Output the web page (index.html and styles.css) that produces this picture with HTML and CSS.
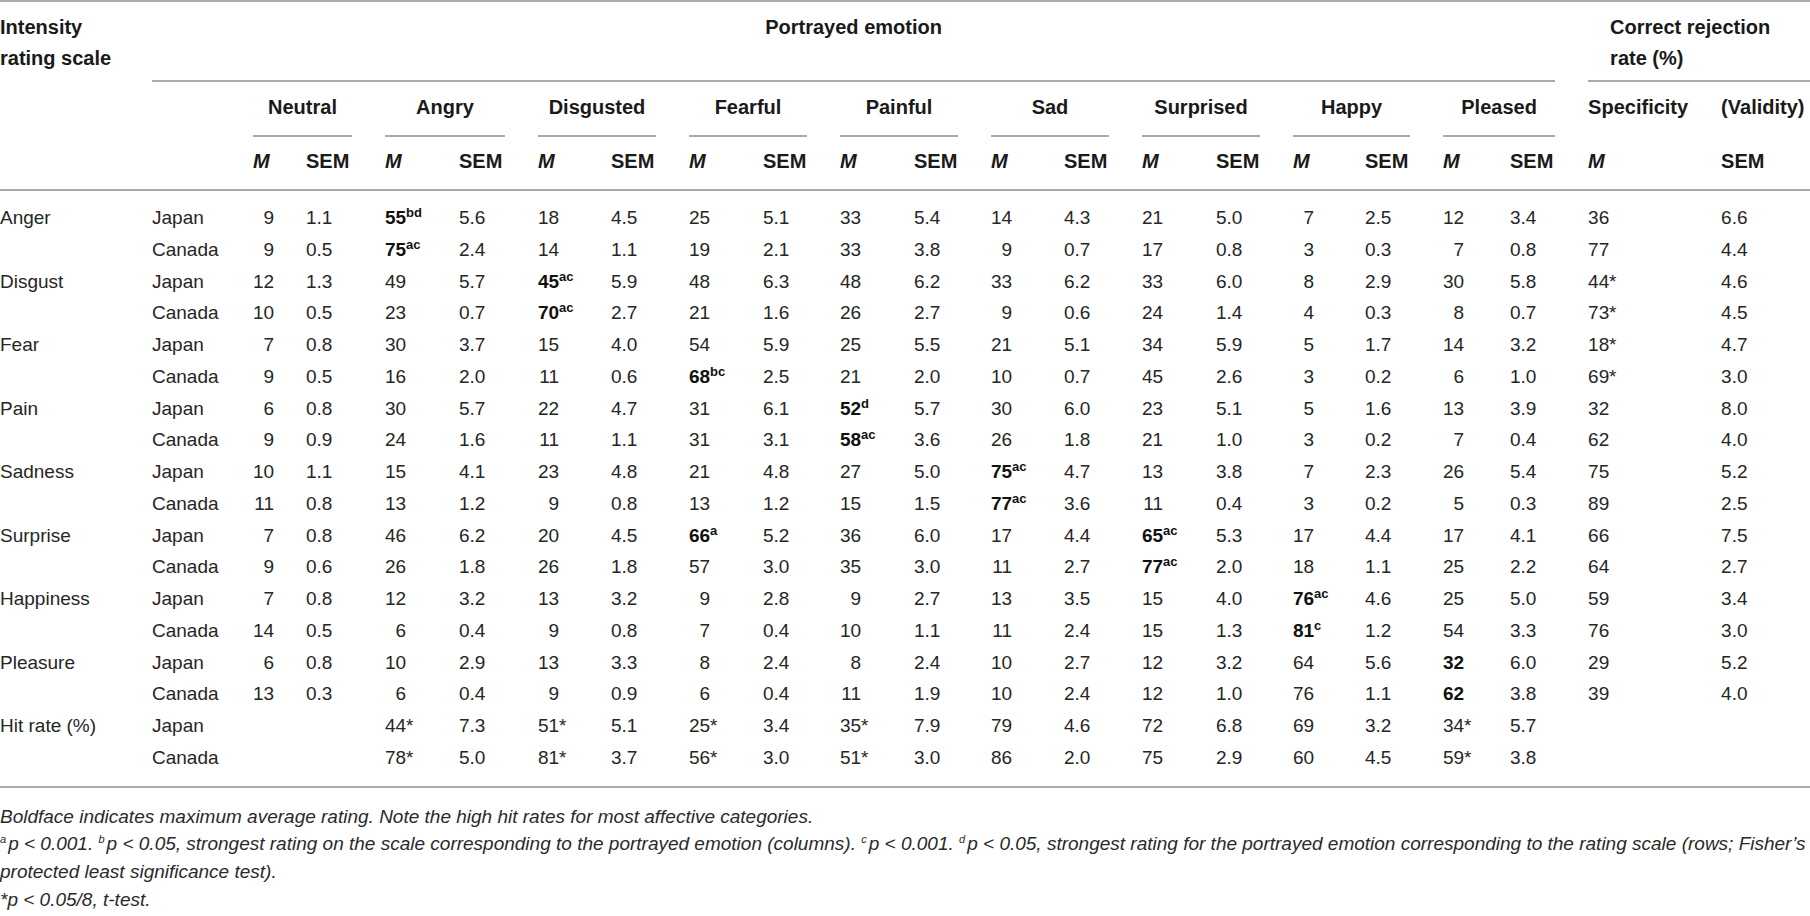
FILE: index.html
```html
<!DOCTYPE html>
<html lang="en">
<head>
<meta charset="utf-8">
<title>Intensity ratings by portrayed emotion</title>
<link rel="stylesheet" href="styles.css">
</head>
<body>
<div class="table-box">
<table class="data">
<colgroup>
<col class="w152"><col class="w101">
<col class="w53"><col class="w79">
<col class="w74"><col class="w79">
<col class="w73"><col class="w78">
<col class="w74"><col class="w77">
<col class="w74"><col class="w77">
<col class="w73"><col class="w78">
<col class="w74"><col class="w77">
<col class="w72"><col class="w78">
<col class="w67"><col class="w78">
<col class="w133"><col class="w89">
</colgroup>
<thead>
<tr class="h1">
<th><div class="h1-cell narrow">Intensity rating scale</div></th>
<th colspan="19"><div class="h1-cell span-line center gap">Portrayed emotion</div></th>
<th colspan="2"><div class="h1-cell span-line indent">Correct rejection rate (%)</div></th>
</tr>
<tr class="h2">
<th></th><th></th>
<th colspan="2"><div class="h2-cell grp">Neutral</div></th>
<th colspan="2"><div class="h2-cell grp">Angry</div></th>
<th colspan="2"><div class="h2-cell grp">Disgusted</div></th>
<th colspan="2"><div class="h2-cell grp">Fearful</div></th>
<th colspan="2"><div class="h2-cell grp">Painful</div></th>
<th colspan="2"><div class="h2-cell grp">Sad</div></th>
<th colspan="2"><div class="h2-cell grp">Surprised</div></th>
<th colspan="2"><div class="h2-cell grp">Happy</div></th>
<th colspan="2"><div class="h2-cell grp">Pleased</div></th>
<th><div class="h2-cell">Specificity</div></th>
<th><div class="h2-cell">(Validity)</div></th>
</tr>
<tr class="h3">
<th></th><th></th>
<th><i>M</i></th><th>SEM</th>
<th><i>M</i></th><th>SEM</th>
<th><i>M</i></th><th>SEM</th>
<th><i>M</i></th><th>SEM</th>
<th><i>M</i></th><th>SEM</th>
<th><i>M</i></th><th>SEM</th>
<th><i>M</i></th><th>SEM</th>
<th><i>M</i></th><th>SEM</th>
<th><i>M</i></th><th>SEM</th>
<th><i>M</i></th><th>SEM</th>
</tr>
</thead>
<tbody>
<tr class="first">
<td>Anger</td><td>Japan</td>
<td><span class="n">9</span></td><td>1.1</td>
<td><b class="n">55</b><sup class="sb">bd</sup></td><td>5.6</td>
<td><span class="n">18</span></td><td>4.5</td>
<td><span class="n">25</span></td><td>5.1</td>
<td><span class="n">33</span></td><td>5.4</td>
<td><span class="n">14</span></td><td>4.3</td>
<td><span class="n">21</span></td><td>5.0</td>
<td><span class="n">7</span></td><td>2.5</td>
<td><span class="n">12</span></td><td>3.4</td>
<td><span class="n">36</span></td><td>6.6</td>
</tr>
<tr>
<td></td><td>Canada</td>
<td><span class="n">9</span></td><td>0.5</td>
<td><b class="n">75</b><sup class="sb">ac</sup></td><td>2.4</td>
<td><span class="n">14</span></td><td>1.1</td>
<td><span class="n">19</span></td><td>2.1</td>
<td><span class="n">33</span></td><td>3.8</td>
<td><span class="n">9</span></td><td>0.7</td>
<td><span class="n">17</span></td><td>0.8</td>
<td><span class="n">3</span></td><td>0.3</td>
<td><span class="n">7</span></td><td>0.8</td>
<td><span class="n">77</span></td><td>4.4</td>
</tr>
<tr>
<td>Disgust</td><td>Japan</td>
<td><span class="n">12</span></td><td>1.3</td>
<td><span class="n">49</span></td><td>5.7</td>
<td><b class="n">45</b><sup class="sb">ac</sup></td><td>5.9</td>
<td><span class="n">48</span></td><td>6.3</td>
<td><span class="n">48</span></td><td>6.2</td>
<td><span class="n">33</span></td><td>6.2</td>
<td><span class="n">33</span></td><td>6.0</td>
<td><span class="n">8</span></td><td>2.9</td>
<td><span class="n">30</span></td><td>5.8</td>
<td><span class="n">44</span>*</td><td>4.6</td>
</tr>
<tr>
<td></td><td>Canada</td>
<td><span class="n">10</span></td><td>0.5</td>
<td><span class="n">23</span></td><td>0.7</td>
<td><b class="n">70</b><sup class="sb">ac</sup></td><td>2.7</td>
<td><span class="n">21</span></td><td>1.6</td>
<td><span class="n">26</span></td><td>2.7</td>
<td><span class="n">9</span></td><td>0.6</td>
<td><span class="n">24</span></td><td>1.4</td>
<td><span class="n">4</span></td><td>0.3</td>
<td><span class="n">8</span></td><td>0.7</td>
<td><span class="n">73</span>*</td><td>4.5</td>
</tr>
<tr>
<td>Fear</td><td>Japan</td>
<td><span class="n">7</span></td><td>0.8</td>
<td><span class="n">30</span></td><td>3.7</td>
<td><span class="n">15</span></td><td>4.0</td>
<td><span class="n">54</span></td><td>5.9</td>
<td><span class="n">25</span></td><td>5.5</td>
<td><span class="n">21</span></td><td>5.1</td>
<td><span class="n">34</span></td><td>5.9</td>
<td><span class="n">5</span></td><td>1.7</td>
<td><span class="n">14</span></td><td>3.2</td>
<td><span class="n">18</span>*</td><td>4.7</td>
</tr>
<tr>
<td></td><td>Canada</td>
<td><span class="n">9</span></td><td>0.5</td>
<td><span class="n">16</span></td><td>2.0</td>
<td><span class="n">11</span></td><td>0.6</td>
<td><b class="n">68</b><sup class="sb">bc</sup></td><td>2.5</td>
<td><span class="n">21</span></td><td>2.0</td>
<td><span class="n">10</span></td><td>0.7</td>
<td><span class="n">45</span></td><td>2.6</td>
<td><span class="n">3</span></td><td>0.2</td>
<td><span class="n">6</span></td><td>1.0</td>
<td><span class="n">69</span>*</td><td>3.0</td>
</tr>
<tr>
<td>Pain</td><td>Japan</td>
<td><span class="n">6</span></td><td>0.8</td>
<td><span class="n">30</span></td><td>5.7</td>
<td><span class="n">22</span></td><td>4.7</td>
<td><span class="n">31</span></td><td>6.1</td>
<td><b class="n">52</b><sup class="sb">d</sup></td><td>5.7</td>
<td><span class="n">30</span></td><td>6.0</td>
<td><span class="n">23</span></td><td>5.1</td>
<td><span class="n">5</span></td><td>1.6</td>
<td><span class="n">13</span></td><td>3.9</td>
<td><span class="n">32</span></td><td>8.0</td>
</tr>
<tr>
<td></td><td>Canada</td>
<td><span class="n">9</span></td><td>0.9</td>
<td><span class="n">24</span></td><td>1.6</td>
<td><span class="n">11</span></td><td>1.1</td>
<td><span class="n">31</span></td><td>3.1</td>
<td><b class="n">58</b><sup class="sb">ac</sup></td><td>3.6</td>
<td><span class="n">26</span></td><td>1.8</td>
<td><span class="n">21</span></td><td>1.0</td>
<td><span class="n">3</span></td><td>0.2</td>
<td><span class="n">7</span></td><td>0.4</td>
<td><span class="n">62</span></td><td>4.0</td>
</tr>
<tr>
<td>Sadness</td><td>Japan</td>
<td><span class="n">10</span></td><td>1.1</td>
<td><span class="n">15</span></td><td>4.1</td>
<td><span class="n">23</span></td><td>4.8</td>
<td><span class="n">21</span></td><td>4.8</td>
<td><span class="n">27</span></td><td>5.0</td>
<td><b class="n">75</b><sup class="sb">ac</sup></td><td>4.7</td>
<td><span class="n">13</span></td><td>3.8</td>
<td><span class="n">7</span></td><td>2.3</td>
<td><span class="n">26</span></td><td>5.4</td>
<td><span class="n">75</span></td><td>5.2</td>
</tr>
<tr>
<td></td><td>Canada</td>
<td><span class="n">11</span></td><td>0.8</td>
<td><span class="n">13</span></td><td>1.2</td>
<td><span class="n">9</span></td><td>0.8</td>
<td><span class="n">13</span></td><td>1.2</td>
<td><span class="n">15</span></td><td>1.5</td>
<td><b class="n">77</b><sup class="sb">ac</sup></td><td>3.6</td>
<td><span class="n">11</span></td><td>0.4</td>
<td><span class="n">3</span></td><td>0.2</td>
<td><span class="n">5</span></td><td>0.3</td>
<td><span class="n">89</span></td><td>2.5</td>
</tr>
<tr>
<td>Surprise</td><td>Japan</td>
<td><span class="n">7</span></td><td>0.8</td>
<td><span class="n">46</span></td><td>6.2</td>
<td><span class="n">20</span></td><td>4.5</td>
<td><b class="n">66</b><sup class="sb">a</sup></td><td>5.2</td>
<td><span class="n">36</span></td><td>6.0</td>
<td><span class="n">17</span></td><td>4.4</td>
<td><b class="n">65</b><sup class="sb">ac</sup></td><td>5.3</td>
<td><span class="n">17</span></td><td>4.4</td>
<td><span class="n">17</span></td><td>4.1</td>
<td><span class="n">66</span></td><td>7.5</td>
</tr>
<tr>
<td></td><td>Canada</td>
<td><span class="n">9</span></td><td>0.6</td>
<td><span class="n">26</span></td><td>1.8</td>
<td><span class="n">26</span></td><td>1.8</td>
<td><span class="n">57</span></td><td>3.0</td>
<td><span class="n">35</span></td><td>3.0</td>
<td><span class="n">11</span></td><td>2.7</td>
<td><b class="n">77</b><sup class="sb">ac</sup></td><td>2.0</td>
<td><span class="n">18</span></td><td>1.1</td>
<td><span class="n">25</span></td><td>2.2</td>
<td><span class="n">64</span></td><td>2.7</td>
</tr>
<tr>
<td>Happiness</td><td>Japan</td>
<td><span class="n">7</span></td><td>0.8</td>
<td><span class="n">12</span></td><td>3.2</td>
<td><span class="n">13</span></td><td>3.2</td>
<td><span class="n">9</span></td><td>2.8</td>
<td><span class="n">9</span></td><td>2.7</td>
<td><span class="n">13</span></td><td>3.5</td>
<td><span class="n">15</span></td><td>4.0</td>
<td><b class="n">76</b><sup class="sb">ac</sup></td><td>4.6</td>
<td><span class="n">25</span></td><td>5.0</td>
<td><span class="n">59</span></td><td>3.4</td>
</tr>
<tr>
<td></td><td>Canada</td>
<td><span class="n">14</span></td><td>0.5</td>
<td><span class="n">6</span></td><td>0.4</td>
<td><span class="n">9</span></td><td>0.8</td>
<td><span class="n">7</span></td><td>0.4</td>
<td><span class="n">10</span></td><td>1.1</td>
<td><span class="n">11</span></td><td>2.4</td>
<td><span class="n">15</span></td><td>1.3</td>
<td><b class="n">81</b><sup class="sb">c</sup></td><td>1.2</td>
<td><span class="n">54</span></td><td>3.3</td>
<td><span class="n">76</span></td><td>3.0</td>
</tr>
<tr>
<td>Pleasure</td><td>Japan</td>
<td><span class="n">6</span></td><td>0.8</td>
<td><span class="n">10</span></td><td>2.9</td>
<td><span class="n">13</span></td><td>3.3</td>
<td><span class="n">8</span></td><td>2.4</td>
<td><span class="n">8</span></td><td>2.4</td>
<td><span class="n">10</span></td><td>2.7</td>
<td><span class="n">12</span></td><td>3.2</td>
<td><span class="n">64</span></td><td>5.6</td>
<td><b class="n">32</b></td><td>6.0</td>
<td><span class="n">29</span></td><td>5.2</td>
</tr>
<tr>
<td></td><td>Canada</td>
<td><span class="n">13</span></td><td>0.3</td>
<td><span class="n">6</span></td><td>0.4</td>
<td><span class="n">9</span></td><td>0.9</td>
<td><span class="n">6</span></td><td>0.4</td>
<td><span class="n">11</span></td><td>1.9</td>
<td><span class="n">10</span></td><td>2.4</td>
<td><span class="n">12</span></td><td>1.0</td>
<td><span class="n">76</span></td><td>1.1</td>
<td><b class="n">62</b></td><td>3.8</td>
<td><span class="n">39</span></td><td>4.0</td>
</tr>
<tr>
<td>Hit rate (%)</td><td>Japan</td>
<td></td><td></td>
<td><span class="n">44</span>*</td><td>7.3</td>
<td><span class="n">51</span>*</td><td>5.1</td>
<td><span class="n">25</span>*</td><td>3.4</td>
<td><span class="n">35</span>*</td><td>7.9</td>
<td><span class="n">79</span></td><td>4.6</td>
<td><span class="n">72</span></td><td>6.8</td>
<td><span class="n">69</span></td><td>3.2</td>
<td><span class="n">34</span>*</td><td>5.7</td>
<td></td><td></td>
</tr>
<tr class="last">
<td></td><td>Canada</td>
<td></td><td></td>
<td><span class="n">78</span>*</td><td>5.0</td>
<td><span class="n">81</span>*</td><td>3.7</td>
<td><span class="n">56</span>*</td><td>3.0</td>
<td><span class="n">51</span>*</td><td>3.0</td>
<td><span class="n">86</span></td><td>2.0</td>
<td><span class="n">75</span></td><td>2.9</td>
<td><span class="n">60</span></td><td>4.5</td>
<td><span class="n">59</span>*</td><td>3.8</td>
<td></td><td></td>
</tr>
</tbody>
</table>
</div>
<div class="notes">
<p>Boldface indicates maximum average rating. Note the high hit rates for most affective categories.</p>
<p><sup class="fs">a</sup>p &lt; 0.001. <sup class="fs">b</sup>p &lt; 0.05, strongest rating on the scale corresponding to the portrayed emotion (columns). <sup class="fs">c</sup>p &lt; 0.001. <sup class="fs">d</sup>p &lt; 0.05, strongest rating for the portrayed emotion corresponding to the rating scale (rows; Fisher’s protected least significance test).</p>
<p>*p &lt; 0.05/8, t-test.</p>
</div>
</body>
</html>
```

FILE: styles.css
```css
html, body {
  margin: 0;
  padding: 0;
  background: #ffffff;
}

body {
  color: #262626;
  font-family: "Liberation Sans", Arial, sans-serif;
  width: 1810px;
}

.table-box {
  border-top: 2px solid #a9a9a9;
  border-bottom: 2px solid #a9a9a9;
}

.data {
  width: 1810px;
  table-layout: fixed;
  border-collapse: separate;
  border-spacing: 0;
  font-size: 19px;
}

.w152 { width: 152px; }
.w101 { width: 101px; }
.w53 { width: 53px; }
.w79 { width: 79px; }
.w74 { width: 74px; }
.w73 { width: 73px; }
.w78 { width: 78px; }
.w77 { width: 77px; }
.w72 { width: 72px; }
.w67 { width: 67px; }
.w133 { width: 133px; }
.w89 { width: 89px; }

.data th,
.data td {
  padding: 0;
  text-align: left;
  vertical-align: top;
  white-space: nowrap;
}

.data thead th {
  font-size: 20px;
  font-weight: bold;
  line-height: 31px;
  color: #1a1a1a;
}

.h1-cell {
  box-sizing: border-box;
  height: 80px;
  padding-top: 10px;
  white-space: normal;
}

.narrow {
  width: 125px;
}

.span-line {
  border-bottom: 2px solid #a9a9a9;
}

.center { text-align: center; }
.gap { margin-right: 33px; }
.indent { padding-left: 22px; }

.h2-cell {
  box-sizing: border-box;
  height: 55px;
  padding-top: 10px;
}

.grp {
  text-align: center;
  margin-right: 33px;
  border-bottom: 2px solid #a9a9a9;
}

.h3 th {
  padding-top: 9px;
  padding-bottom: 12px;
  border-bottom: 2px solid #a9a9a9;
}

.h3 th i {
  font-style: italic;
}

.data tbody td {
  line-height: 31.76px;
}

.data tbody tr.first td {
  padding-top: 11px;
}

.data tbody tr.last td {
  padding-bottom: 12px;
}

.n {
  display: inline-block;
  width: 21px;
  text-align: right;
}

b.n {
  font-weight: bold;
  color: #111111;
}

.sb {
  font-size: 13px;
  font-weight: bold;
  line-height: 0;
  vertical-align: 7px;
  color: #111111;
}

.notes {
  margin-top: 15px;
  font-size: 19px;
  font-style: italic;
  line-height: 27.7px;
  color: #2a2a2a;
}

.notes p {
  margin: 0;
}

.fs {
  font-size: 11px;
  line-height: 0;
  vertical-align: 7px;
  margin-right: 2px;
}
```
